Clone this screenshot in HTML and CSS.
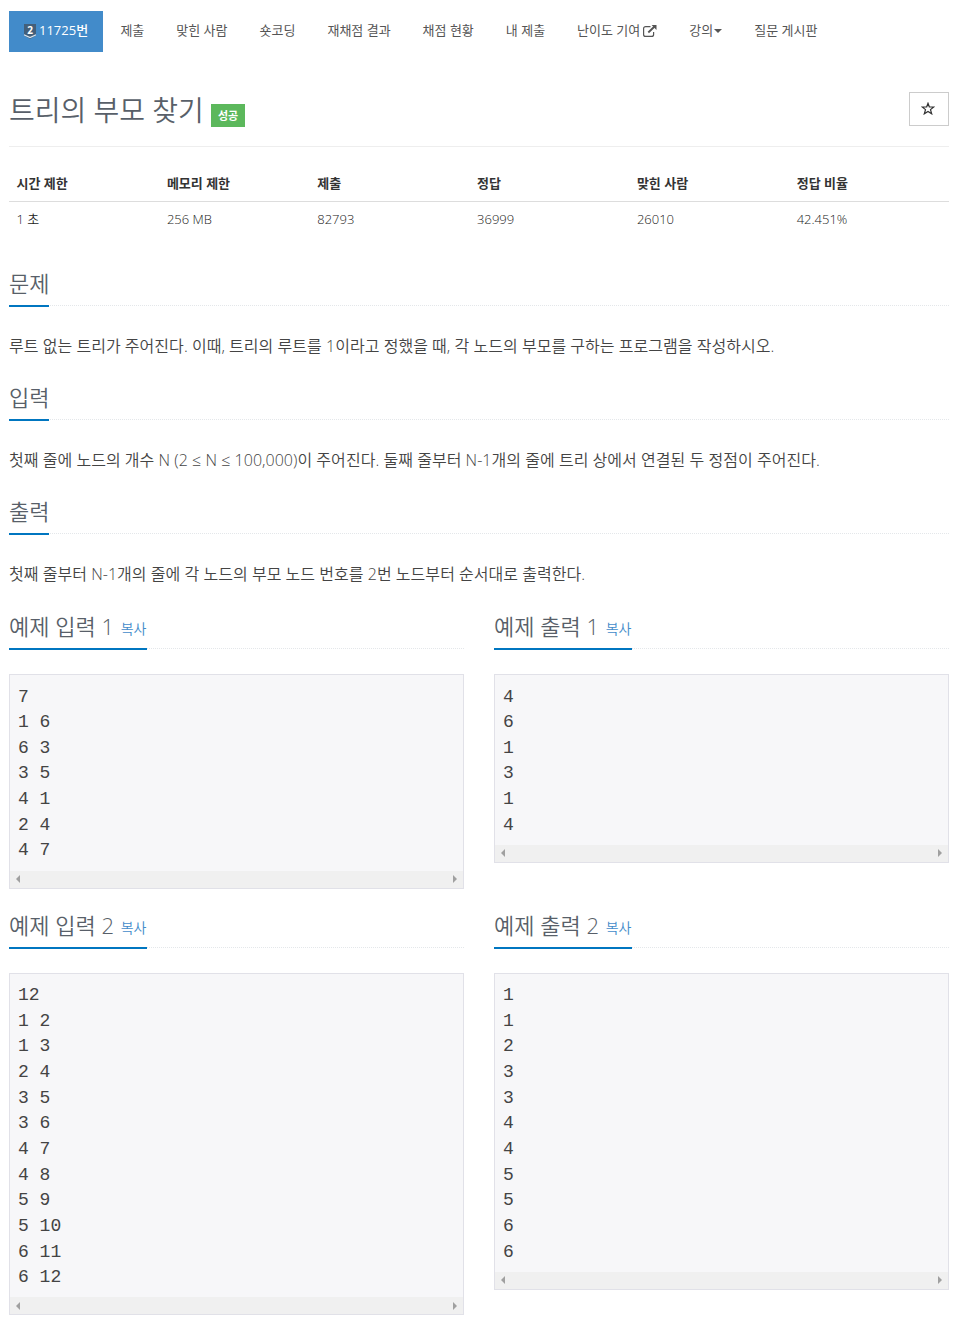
FILE: index.html
```
<!DOCTYPE html>
<html lang="ko">
<head>
<meta charset="utf-8">
<title>11725번: 트리의 부모 찾기</title>
<link rel="stylesheet" href="styles.css">
</head>
<body>
<nav class="menu">
  <a class="item active"><svg class="tier" width="12" height="15" viewBox="0 0 12 15"><path fill="#435f7a" d="M0 0h12v11.500L6 15 0 11.500z"/><path fill="none" stroke="#d5e3ef" stroke-width="1.200" d="M0 10.800l6 2.700 6-2.700"/><text class="tier-level" x="6" y="9.500" text-anchor="middle">2</text></svg>11725번</a>
  <a class="item">제출</a>
  <a class="item">맞힌 사람</a>
  <a class="item">숏코딩</a>
  <a class="item">재채점 결과</a>
  <a class="item">채점 현황</a>
  <a class="item">내 제출</a>
  <a class="item">난이도 기여<svg class="external" width="14" height="12" viewBox="0 0 14 12"><path fill="none" stroke="#555" stroke-width="1.200" d="M7.500 1.600H2.600a2 2 0 0 0-2 2v5.800a2 2 0 0 0 2 2h6a2 2 0 0 0 2-2V7"/><path fill="none" stroke="#555" stroke-width="1.900" d="M5.300 7.500l6.200-6"/><path fill="#555" d="M8.600 0H13.500v5z"/></svg></a>
  <a class="item">강의<span class="caret"></span></a>
  <a class="item">질문 게시판</a>
</nav>
<header class="title-row">
  <h1 class="title">트리의 부모 찾기</h1>
  <span class="label">성공</span>
  <button class="favorite" aria-label="즐겨찾기"><svg width="14" height="13" viewBox="0 0 14 13"><path fill="none" stroke="#333" stroke-width="1.200" d="M7 1.300l1.300 3.500 4.400.2-3.200 2.600 1.200 4.200L7 9.400l-3.700 2.400 1.200-4.200L1.300 5l4.400-.2z"/></svg></button>
</header>
<table class="info">
  <thead><tr><th class="narrow">시간 제한</th><th class="narrow">메모리 제한</th><th>제출</th><th>정답</th><th>맞힌 사람</th><th>정답 비율</th></tr></thead>
  <tbody><tr><td>1 초</td><td>256 MB</td><td>82793</td><td>36999</td><td>26010</td><td>42.451%</td></tr></tbody>
</table>
<main>
  <section class="section">
    <div class="headline"><h2>문제</h2></div>
    <p class="text">루트 없는 트리가 주어진다. 이때, 트리의 루트를 1이라고 정했을 때, 각 노드의 부모를 구하는 프로그램을 작성하시오.</p>
  </section>
  <section class="section">
    <div class="headline"><h2>입력</h2></div>
    <p class="text">첫째 줄에 노드의 개수 N (2 ≤ N ≤ 100,000)이 주어진다. 둘째 줄부터 N-1개의 줄에 트리 상에서 연결된 두 정점이 주어진다.</p>
  </section>
  <section class="section">
    <div class="headline"><h2>출력</h2></div>
    <p class="text">첫째 줄부터 N-1개의 줄에 각 노드의 부모 노드 번호를 2번 노드부터 순서대로 출력한다.</p>
  </section>
  <div class="samples">
    <section>
      <div class="headline"><h2>예제 입력 1 <a class="copy">복사</a></h2></div>
      <div class="sample"><pre>7
1 6
6 3
3 5
4 1
2 4
4 7</pre><div class="scrollbar"><i class="left"></i><i class="right"></i></div></div>
    </section>
    <section>
      <div class="headline"><h2>예제 출력 1 <a class="copy">복사</a></h2></div>
      <div class="sample"><pre>4
6
1
3
1
4</pre><div class="scrollbar"><i class="left"></i><i class="right"></i></div></div>
    </section>
    <section>
      <div class="headline"><h2>예제 입력 2 <a class="copy">복사</a></h2></div>
      <div class="sample"><pre>12
1 2
1 3
2 4
3 5
3 6
4 7
4 8
5 9
5 10
6 11
6 12</pre><div class="scrollbar"><i class="left"></i><i class="right"></i></div></div>
    </section>
    <section>
      <div class="headline"><h2>예제 출력 2 <a class="copy">복사</a></h2></div>
      <div class="sample"><pre>1
1
2
3
3
4
4
5
5
6
6</pre><div class="scrollbar"><i class="left"></i><i class="right"></i></div></div>
    </section>
  </div>
</main>
</body>
</html>
```
FILE: styles.css
```
* { box-sizing: border-box; }
body {
  margin: 0;
  padding: 11px 9px 0;
  height: 1323px;
  overflow: hidden;
  background: #fff;
  color: #333;
  font: 360 13px/18.57px "Open Sans", "Noto Sans CJK KR", sans-serif;
}
h1, h2, p, pre { margin: 0; }
.menu { display: flex; gap: 2px; height: 41px; }
.item {
  display: flex;
  align-items: center;
  padding: 0 15px 2px;
  white-space: nowrap;
  color: #555;
  font-weight: 400;
}
.active { width: 94px; margin-right: 0.4px; background: #428bca; color: #fff; font-weight: 500; padding-right: 0; }
.tier { margin: 2px 3px 0 0; }
.tier-level { font: 700 10px "Open Sans", sans-serif; fill: #fff; }
.external { margin-left: 3px; }
.caret {
  margin: 1px 0 0 1px;
  border: 4px solid transparent;
  border-top-color: #555;
  border-bottom: 0;
}
.title-row {
  display: flex;
  height: 95px;
  padding-top: 40px;
  border-bottom: 1px solid #eee;
}
.title { font-size: 28px; line-height: 36px; color: #585f69; font-weight: 360; }
.label {
  height: 23px;
  margin: 12px 0 0 7px;
  padding: 0 7px;
  background: #5cb85c;
  color: #fff;
  font-size: 11px;
  line-height: 24px;
  font-weight: 700;
}
.favorite {
  width: 40px;
  height: 34px;
  margin-left: auto;
  padding: 0 2px 2px 0;
  display: flex;
  align-items: center;
  justify-content: center;
  background: #fff;
  border: 1px solid #ccc;
}
.info { width: 940px; margin-top: 19px; table-layout: fixed; border-collapse: separate; border-spacing: 0; }
.info th, .info td { height: 36px; padding: 0 7.5px; text-align: left; width: 17%; }
.info .narrow { width: 16%; }
.info th { border-bottom: 1px solid #ddd; font-weight: 700; }
.info td { padding-bottom: 2px; color: #222; }
.section { height: 114px; }
.section:first-child { margin-top: 30px; }
.headline { display: flex; height: 38px; border-bottom: 1px dotted #e4e7ea; }
.headline h2 {
  height: 39px;
  border-bottom: 2px solid #0076c0;
  font-size: 22px;
  line-height: 31px;
  font-weight: 360;
  color: #585f69;
}
.copy { margin: 0 1px; font-size: 14px; line-height: 1; vertical-align: 1px; color: #428bca; }
.text { margin-top: 27px; font-size: 16px; line-height: 26px; letter-spacing: 0.035px; color: #444; white-space: nowrap; }
.samples {
  display: grid;
  grid-template-columns: 455px 455px;
  column-gap: 30px;
  row-gap: 21px;
  align-items: start;
  margin-top: 1px;
}
.sample { margin-top: 26px; border: 1px solid #e1e1e8; background: #f7f7f9; }
.samples .headline { margin-bottom: -1px; }
.sample pre {
  padding: 9.5px 8px 6.5px;
  font: 18px/25.66px "Liberation Mono", monospace;
  color: #444;
}
.scrollbar {
  display: flex;
  align-items: center;
  justify-content: space-between;
  height: 17px;
  padding: 0 6px;
  background: #f0f0f0;
}
.left, .right { border: 4px solid transparent; }
.left { border-left: 0; border-right-color: #a0a0a0; }
.right { border-right: 0; border-left-color: #a0a0a0; }
```
